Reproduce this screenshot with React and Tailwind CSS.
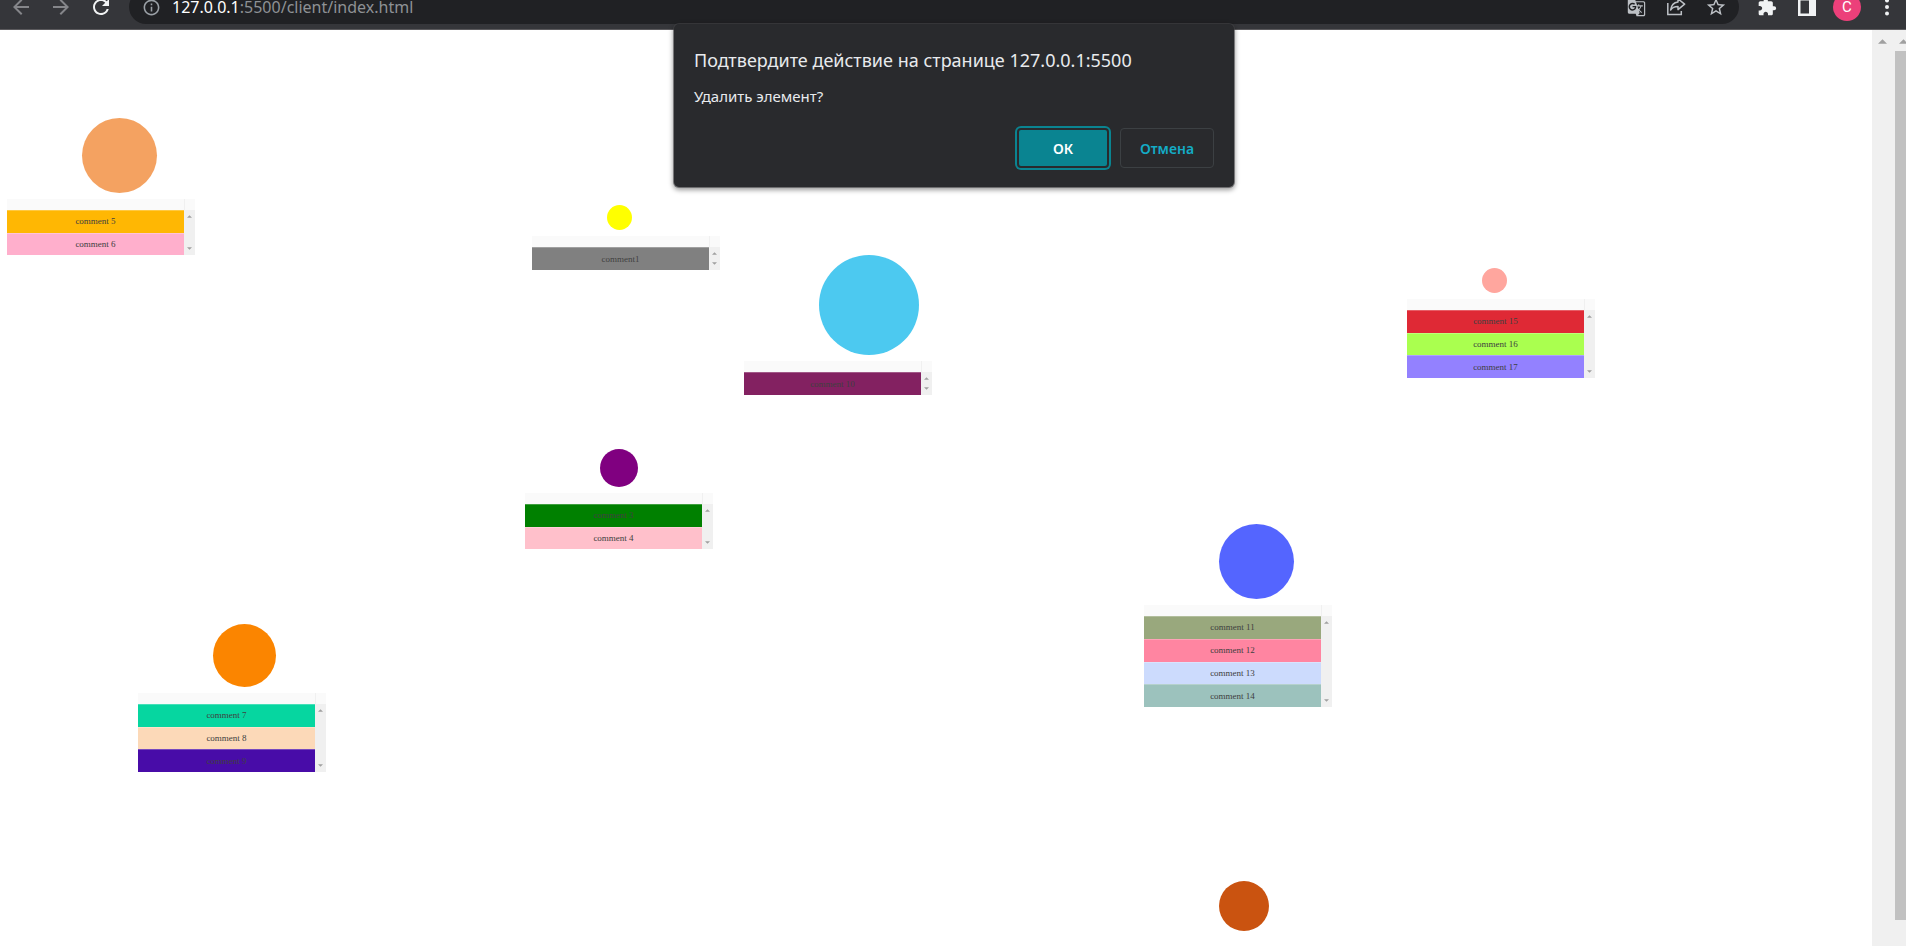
import React from "react";
import { MdArrowBack, MdArrowForward, MdRefresh, MdInfoOutline, MdGTranslate, MdStarOutline, MdExtension } from "react-icons/md";

const nodes = [
  { pos: "left-[7px] top-[88px]", dot: "size-[75px] bg-[#f4a261]", rows: [["comment 5", "bg-[#ffb703]"], ["comment 6", "bg-[#ffafcc]"]], size: "h-[45px]" },
  { pos: "left-[532px] top-[175px]", dot: "size-[25px] bg-[#ffff00]", rows: [["comment1", "bg-[#808080]"]], size: "h-[23px]" },
  { pos: "left-[744px] top-[225px]", dot: "size-[100px] bg-[#4cc9f0]", rows: [["comment 10", "bg-[#832161]"]], size: "h-[23px]" },
  { pos: "left-[1407px] top-[238px]", dot: "size-[25px] bg-[#ffa69e]", rows: [["comment 15", "bg-[#df2935]"], ["comment 16", "bg-[#aaff4f]"], ["comment 17", "bg-[#9381ff]"]], size: "h-[68px]" },
  { pos: "left-[525px] top-[419px]", dot: "size-[38px] bg-[#800080]", rows: [["comment 3", "bg-[#008000]"], ["comment 4", "bg-[#ffc0cb]"]], size: "h-[45px]" },
  { pos: "left-[1144px] top-[494px]", dot: "size-[75px] bg-[#5465ff]", rows: [["comment 11", "bg-[#99a87d]"], ["comment 12", "bg-[#ff85a1]"], ["comment 13", "bg-[#ccdbfd]"], ["comment 14", "bg-[#9cc2bd]"]], size: "h-[91px]" },
  { pos: "left-[138px] top-[594px]", dot: "size-[63px] bg-[#fb8500]", rows: [["comment 7", "bg-[#06d6a0]"], ["comment 8", "bg-[#fcd9b8]"], ["comment 9", "bg-[#480ca8]"]], size: "h-[68px]" },
  { pos: "left-[1144px] top-[851px]", dot: "size-[50px] bg-[#ca5310]", rows: [] },
];

function Arrow({ down, className }) {
  return (
    <svg viewBox="0 0 8 4" className={className} fill="currentColor" aria-hidden="true">
      <path d={down ? "M0 0h8L4 4z" : "M0 4h8L4 0z"} />
    </svg>
  );
}

function Node({ node }) {
  return (
    <section className={`absolute ${node.pos}`}>
      <div className={`ml-[75px] rounded-full ${node.dot}`} />
      {node.rows.length > 0 && (
        <div className="mt-[6px] w-[188px]">
          <div className="flex h-[11px] bg-[#fafafa]">
            <div className="w-[178px] border-r border-[#f0f0f0]" />
          </div>
          <div className="flex">
            <table className={`w-[177px] border-collapse font-['Liberation_Serif',serif] text-[9px] leading-[10px] text-[#404040] ${node.size}`}>
              <tbody>
                {node.rows.map(([text, color]) => (
                  <tr key={text} className={color}>
                    <td className="p-0 text-center shadow-[inset_0_1px_0_rgba(255,255,255,0.25)]">{text}</td>
                  </tr>
                ))}
              </tbody>
            </table>
            <div className="flex w-[11px] flex-col items-center justify-between bg-[#f0f0f0] py-[5px] text-[#a0a0a0]">
              <Arrow className="h-[3px] w-[5px]" />
              <Arrow down className="h-[3px] w-[5px]" />
            </div>
          </div>
        </div>
      )}
    </section>
  );
}

function ShareIcon() {
  return (
    <svg viewBox="0 0 20 20" className="size-5" fill="none" stroke="currentColor" strokeWidth="1.5" aria-hidden="true">
      <path d="M1.8 6v11.500h13.500V14" />
      <path d="M12 1.800 18.600 7.200 12 12.600v-3.200c-3.300 0-5.800 1-7.400 3.600C5.200 8.600 7.800 5.500 12 5z" strokeLinejoin="round" />
    </svg>
  );
}

const iconButton = "flex w-10 justify-center";

export default function App() {
  return (
    <div className="relative flex h-screen flex-col overflow-hidden bg-white font-['Noto_Sans',sans-serif]">
      <header className="h-[30px] shrink-0 overflow-hidden border-b border-[#5b5a5d] bg-[#35363a]">
        <div className="-mt-[10px] flex h-[34px] items-center">
          <nav className="flex w-[129px] shrink-0 pl-[1px] text-[#85868a]">
            <button aria-label="Back" className={iconButton}><MdArrowBack size={24} /></button>
            <button aria-label="Forward" className={iconButton}><MdArrowForward size={24} /></button>
            <button aria-label="Reload" className={`${iconButton} text-[#f1f3f4]`}><MdRefresh size={24} /></button>
          </nav>
          <div className="flex h-full min-w-0 flex-1 items-center rounded-full bg-[#202124] pr-[3px] pl-[13px] text-[#bdc1c6]">
            <button aria-label="Site information" className="text-[#9aa0a6]"><MdInfoOutline size={19} /></button>
            <div role="textbox" aria-label="Address" className="ml-[11px] flex-1 text-[16px] leading-6 text-[#8e9195]">
              <span className="text-white">127.0.0.1</span>:5500/client/index.html
            </div>
            <button aria-label="Translate" className={iconButton}><MdGTranslate size={19} /></button>
            <button aria-label="Share" className={iconButton}><ShareIcon /></button>
            <button aria-label="Bookmark" className={iconButton}><MdStarOutline size={22} /></button>
          </div>
          <div className="flex w-[167px] shrink-0 items-center pl-[8px] text-[#f1f3f4]">
            <button aria-label="Extensions" className={iconButton}><MdExtension size={20} /></button>
            <button aria-label="Side panel" className={iconButton}>
              <svg viewBox="0 0 18 18" className="size-[18px]" fill="currentColor" aria-hidden="true">
                <path fillRule="evenodd" d="M0 0h18v18H0zM2.500 2.500v13h8.500v-13z" />
              </svg>
            </button>
            <button aria-label="Profile" className="ml-[6px] flex size-7 items-center justify-center rounded-full bg-[#ec407a] font-[Roboto,sans-serif] text-[15px] leading-none text-white">C</button>
            <button aria-label="Menu" className="ml-[16px] flex w-5 justify-center">
              <svg viewBox="0 0 4 18" className="h-[18px] w-1" fill="currentColor" aria-hidden="true">
                <circle cx="2" cy="2.500" r="2" /><circle cx="2" cy="9" r="2" /><circle cx="2" cy="15.500" r="2" />
              </svg>
            </button>
          </div>
        </div>
      </header>

      <div className="flex min-h-0 flex-1">
        <main className="relative min-w-0 flex-1">
          {nodes.map((node) => <Node key={node.pos} node={node} />)}
        </main>
        <div className="flex w-[23px] flex-col items-center bg-[#f0f0f0] pt-[9px] pr-[3px] text-[#a0a0a0]">
          <Arrow className="h-[5px] w-[9px]" />
        </div>
        <div className="flex w-[11px] flex-col overflow-hidden bg-[#f0f0f0] pb-[26px] text-[#a0a0a0]">
          <div className="h-[21px] shrink-0 pt-[9px] pl-[4px]"><Arrow className="h-[5px] w-[9px]" /></div>
          <div className="flex-1 bg-[#c1c1c1]" />
        </div>
      </div>

      <div role="dialog" aria-labelledby="dialog-title" className="absolute top-[24px] left-1/2 w-[560px] -translate-x-[279px] rounded-[5px] bg-[#292a2d] px-5 pt-[22px] pb-[19px] text-[#e8eaed] shadow-[0_0_0_1px_rgba(70,70,74,0.6),0_2px_5px_1px_rgba(0,0,0,0.4)]">
        <h1 id="dialog-title" className="text-[18px] leading-7">Подтвердите действие на странице 127.0.0.1:5500</h1>
        <p className="mt-[12px] text-[15px] leading-5">Удалить элемент?</p>
        <div className="mt-[22px] flex justify-end gap-[11px] text-[14px] font-semibold">
          <button className="h-10 w-[92px] rounded-[4px] border-2 border-[#292a2d] bg-[#0a8491] text-white ring-2 ring-[#0a8491]">ОК</button>
          <button className="h-10 w-[94px] rounded-[4px] border border-[#3c4043] text-[#14acc6]">Отмена</button>
        </div>
      </div>
    </div>
  );
}
